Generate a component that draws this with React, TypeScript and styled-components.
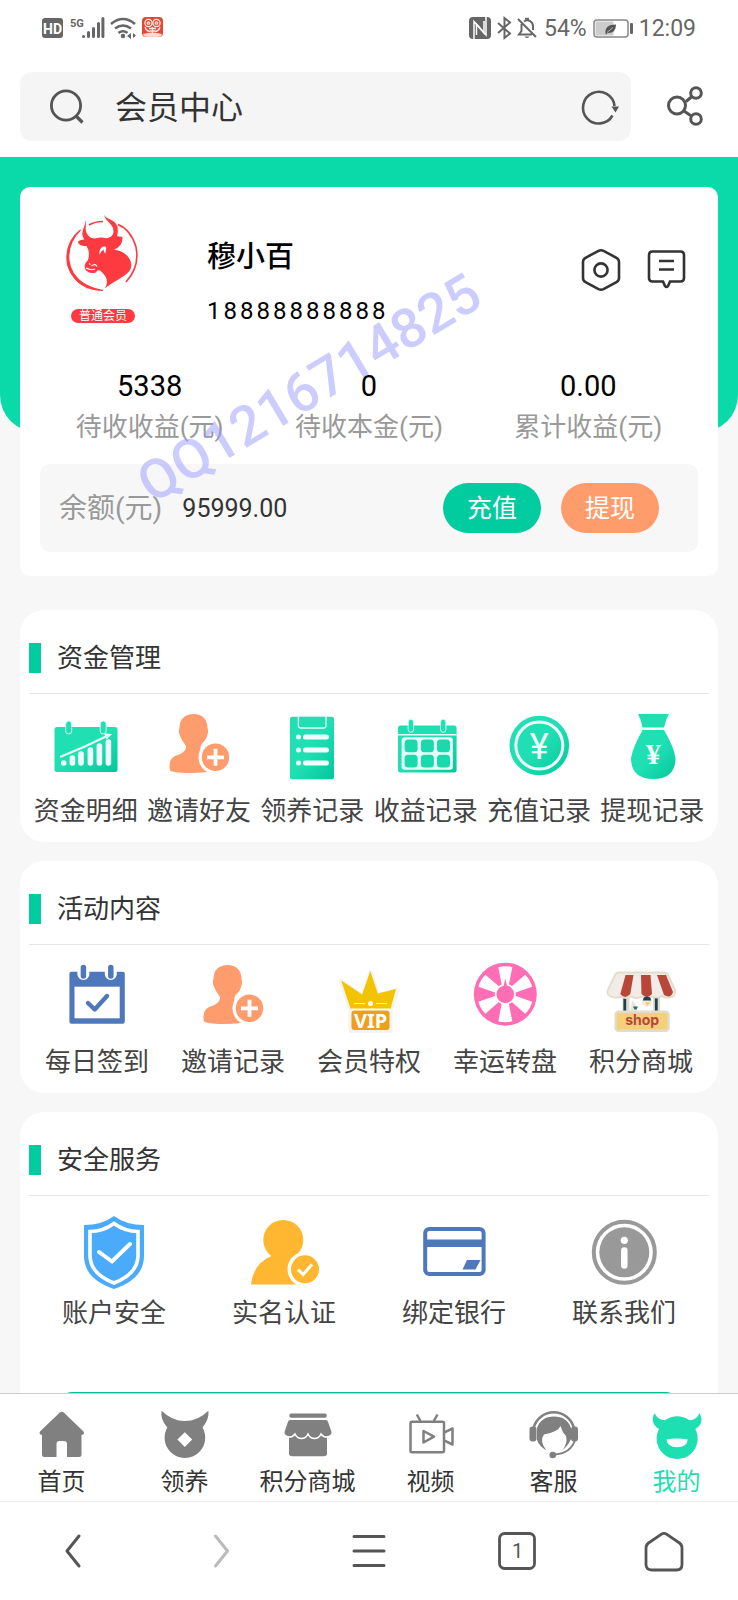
import React from "react";
import styled, { createGlobalStyle } from "styled-components";

const GlobalStyle = createGlobalStyle`
  *, *::before, *::after { box-sizing: border-box; }
  html, body, #root { height: 100%; }
  body {
    margin: 0;
    background: #f7f7f7;
    font-family: Roboto, "Noto Sans CJK SC", sans-serif;
    color: #333;
  }
  button { border: 0; padding: 0; background: none; font: inherit; color: inherit; cursor: pointer; }
  a { color: inherit; text-decoration: none; }
  h1, h2, p, dl, dt, dd { margin: 0; font-weight: 400; }
  svg { display: block; overflow: visible; }
`;

const Screen = styled.div`
  display: flex;
  flex-direction: column;
  height: 100vh;
  overflow: hidden;
`;

/* ---------- top of the browser ---------- */

const StatusBar = styled.div`
  display: flex;
  justify-content: space-between;
  align-items: center;
  height: 56px;
  padding: 0 42px;
  background: #fff;
  color: #666;
  font-size: 23px;
`;

const StatusGroup = styled.div`
  display: flex;
  align-items: center;
  gap: 6px;
`;

const AddressRow = styled.div`
  display: flex;
  align-items: center;
  gap: 35px;
  padding: 16px 32px 16px 20px;
  background: #fff;
`;

const SearchBox = styled.label`
  display: flex;
  flex: 1;
  align-items: center;
  gap: 30px;
  height: 69px;
  padding: 0 12px 0 29px;
  border-radius: 12px;
  background: #f5f5f5;
`;

const SearchInput = styled.input`
  flex: 1;
  min-width: 0;
  padding: 2px 0 0;
  border: 0;
  outline: 0;
  background: transparent;
  color: #333;
  font: 32px/44px Roboto, "Noto Sans CJK SC", sans-serif;
`;

/* ---------- scrolling page ---------- */

const Page = styled.main`
  flex: 1;
  min-height: 0;
  overflow-y: auto;
  scrollbar-width: none;
`;

const Hero = styled.div`
  height: 275px;
  margin-bottom: -245px;
  border-radius: 0 0 37px 37px;
  background: #0ad9a9;
`;

const Content = styled.div`
  display: flex;
  flex-direction: column;
  gap: 19px;
  padding: 0 20px;
`;

const ProfileCard = styled.section`
  position: relative;
  margin-bottom: 15px;
  padding: 26px 20px 24px;
  border-radius: 10px;
  background: #fff;
`;

const ProfileTop = styled.div`
  display: flex;
  height: 114px;
  padding: 0 13px 0 26px;
`;

const Avatar = styled.div`
  display: flex;
  flex-direction: column;
  align-items: center;
  gap: 16px;
  width: 74px;
`;

const Badge = styled.span`
  width: 64px;
  border-radius: 7px;
  background: #fe3a41;
  color: #fff;
  font-size: 12px;
  line-height: 14px;
  text-align: center;
`;

const Identity = styled.div`
  flex: 1;
  padding: 22px 0 0 67px;
  color: #000;
`;

const Name = styled.h1`
  font-size: 29px;
  font-weight: 500;
  line-height: 44px;
`;

const Phone = styled.p`
  margin-top: 16px;
  font-size: 24px;
  line-height: 32px;
  letter-spacing: 3px;
`;

const ProfileActions = styled.div`
  display: flex;
  align-items: flex-start;
  gap: 28px;
  padding-top: 36px;
`;

const Stats = styled.dl`
  display: grid;
  grid-template-columns: repeat(3, 1fr);
  margin-top: 40px;
`;

const Stat = styled.div`
  display: flex;
  flex-direction: column-reverse;
  align-items: center;
  dd { color: #000; font-size: 29px; line-height: 38px; }
  dt { color: #999; font-size: 26px; line-height: 44px; }
`;

const Balance = styled.div`
  display: flex;
  align-items: center;
  gap: 20px;
  height: 88px;
  margin-top: 15px;
  padding: 0 39px 0 19px;
  border-radius: 10px;
  background: #f7f7f7;
`;

const BalanceLabel = styled.span`
  padding-bottom: 4px;
  color: #999;
  font-size: 28px;
`;

const BalanceValue = styled.span`
  flex: 1;
  font-size: 25px;
`;

const PillButton = styled.button<{ $color: string }>`
  width: 98px;
  height: 50px;
  padding-bottom: 4px;
  border-radius: 25px;
  background: ${(p) => p.$color};
  color: #fff;
  font-size: 25px;
`;

const Watermark = styled.span`
  position: absolute;
  left: 137px;
  top: 270px;
  transform: rotate(-31deg);
  transform-origin: 0 100%;
  color: rgba(154, 154, 255, 0.5);
  font-size: 55px;
  line-height: 55px;
  font-weight: 500;
  pointer-events: none;
`;

/* ---------- menu sections ---------- */

const Section = styled.section`
  padding: 33px 9px 13px;
  border-radius: 24px;
  background: #fff;
`;

const SectionHead = styled.header`
  display: flex;
  align-items: center;
  gap: 16px;
  padding-bottom: 20px;
  border-bottom: 1px solid #e4e4e4;
  &::before { content: ""; width: 12px; height: 30px; background: #00cca0; }
`;

const SectionTitle = styled.h2`
  font-size: 26px;
  line-height: 30px;
`;

const MenuRow = styled.nav`
  display: flex;
  padding-top: 18px;
`;

const MenuItem = styled.a`
  display: flex;
  flex: 1;
  flex-direction: column;
  align-items: center;
  gap: 11px;
  color: #444;
  font-size: 26px;
  line-height: 36px;
  white-space: nowrap;
`;

const LogoutButton = styled.button`
  display: block;
  width: calc(100% - 62px);
  height: 80px;
  margin: 61px 31px 40px;
  border-radius: 12px;
  background: #0ab99a;
`;

/* ---------- bottom bars ---------- */

const TabBar = styled.nav`
  display: flex;
  height: 108px;
  padding-top: 16px;
  border-top: 1px solid #ccc;
  background: #fff;
`;

const Tab = styled.a<{ $active?: boolean }>`
  display: flex;
  flex: 1;
  flex-direction: column;
  align-items: center;
  gap: 4px;
  color: ${(p) => (p.$active ? "#1ddfb1" : "#333")};
  font-size: 24px;
  line-height: 36px;
  white-space: nowrap;
`;

const BrowserBar = styled.div`
  display: flex;
  height: 99px;
  border-top: 1px solid #eee;
  background: #fff;
`;

const BrowserButton = styled.button<{ $muted?: boolean }>`
  display: flex;
  flex: 1;
  align-items: center;
  justify-content: center;
  color: ${(p) => (p.$muted ? "#bbb" : "#555")};
`;

/* ---------- drawings ---------- */

const GradientDefs = styled.svg`
  position: absolute;
  width: 0;
  height: 0;
`;

const Icon = ({ size = 70, children }: { size?: number; children: React.ReactNode }) => (
  <svg width={size} height={size} viewBox={`0 0 ${size} ${size}`} fill="none" aria-hidden="true">
    {children}
  </svg>
);

const Gradients = () => (
  <GradientDefs aria-hidden="true">
    <defs>
      <linearGradient id="mint" x1="0" y1="0" x2="1" y2="1">
        <stop offset="0.5" stopColor="#1fdfb3" />
        <stop offset="1" stopColor="#06c79c" />
      </linearGradient>
    </defs>
  </GradientDefs>
);

const SignalIcons = () => (
  <svg width="122" height="24" viewBox="0 0 122 24" aria-hidden="true">
    <rect x="0" y="2" width="21" height="20" rx="3" fill="#666" />
    <text x="10.500" y="17.500" fill="#fff" fontSize="14" fontWeight="700" textAnchor="middle">HD</text>
    <text x="28" y="10.500" fill="#666" fontSize="11" fontWeight="700">5G</text>
    <g stroke="#666" strokeWidth="3" strokeLinecap="round">
      <path d="M41.500 20.500v0M46.500 20.500v-4M51.500 20.500v-8M56.500 20.500v-13M60.900 20.500v-18" />
    </g>
    <g stroke="#666" strokeWidth="2.600" fill="none">
      <path d="M69 8q12 -10 24 0M73 12.500q8 -6 16 0M76.500 17q4.500 -3.500 9 0" />
    </g>
    <circle cx="81" cy="20" r="2.300" fill="#666" />
    <path d="M85 20l4 -3v6zM94 19.500l-3 -2.500v5z" fill="#666" />
    <rect x="100" y="1" width="21" height="20" rx="4" fill="#df4a35" />
    <path d="M101 18q9 -3 19 0l-1 2.500q-8 1 -17 0z" fill="#ffd9cc" />
    <g fill="none" stroke="#ffe8df" strokeWidth="1.300">
      <circle cx="106.500" cy="7" r="3.600" />
      <circle cx="114.500" cy="7" r="3.600" />
      <circle cx="106.500" cy="7" r="1.200" />
      <circle cx="114.500" cy="7" r="1.200" />
      <path d="M103 11q1 4 5 4.500M118 11q-1 4 -5 4.500M107 12.500h7M108 15h5M110.500 11v7" />
    </g>
  </svg>
);

const NfcIcon = () => (
  <svg width="22" height="22" viewBox="0 0 22 22" aria-hidden="true">
    <rect width="22" height="22" rx="4" fill="#666" />
    <path d="M5 22V4.500L15 16V4" fill="none" stroke="#fff" strokeWidth="1.500" />
    <path d="M17 0V18L7.500 7V18" fill="none" stroke="#fff" strokeWidth="1.500" />
  </svg>
);

const BluetoothIcon = () => (
  <svg width="14" height="22" viewBox="0 0 14 22" aria-hidden="true">
    <path d="M1 6l12 10.500L7.500 21V1L13 5.500L1 16" fill="none" stroke="#666" strokeWidth="2" />
  </svg>
);

const MutedBellIcon = () => (
  <svg width="21" height="22" viewBox="0 0 21 22" aria-hidden="true">
    <g fill="none" stroke="#666" strokeWidth="2">
      <path d="M4.500 7v7l-2.500 3.500h13M7 4.500q3 -2 6 -0.500q3 2 3 5v4M1 2l18 18" />
      <path d="M8 1.800h4" />
    </g>
    <path d="M7.500 19.500h5q-2.500 3 -5 0z" fill="#666" />
  </svg>
);

const BatteryIcon = () => (
  <svg width="40" height="19" viewBox="0 0 40 19" aria-hidden="true">
    <rect x="1" y="1" width="34" height="17" rx="3" fill="#fff" stroke="#888" strokeWidth="1.500" />
    <rect x="2.500" y="2.500" width="18" height="14" rx="1" fill="#ccc" />
    <path d="M12.500 14.500q-1 -9 10.500 -9q0 9 -8.500 8.500l-1 1.500z" fill="#555" />
    <path d="M14 13.500l6 -5" stroke="#ccc" strokeWidth="0.800" />
    <rect x="37" y="4" width="3" height="11" rx="1" fill="#666" />
  </svg>
);

const SearchIcon = () => (
  <Icon size={36}>
    <circle cx="17" cy="16.500" r="14.600" stroke="#555" strokeWidth="2.800" />
    <path d="M27 27l6.500 6.500" stroke="#555" strokeWidth="3.200" />
  </Icon>
);

const ReloadIcon = () => (
  <Icon size={38}>
    <path d="M33.500 18A15.800 15.800 0 1 0 31.500 27.500" stroke="#555" strokeWidth="2.600" />
    <path d="M30.500 18.500h7.500l-3.500 6z" fill="#555" />
  </Icon>
);

const ShareIcon = () => (
  <Icon size={40}>
    <g stroke="#555" strokeWidth="3">
      <circle cx="11" cy="18.500" r="8.500" />
      <circle cx="30" cy="6" r="5.300" />
      <circle cx="30" cy="32" r="5.300" />
      <path d="M26 9.500l-6 5M18 24l8 5.500" />
    </g>
  </Icon>
);

const BullLogo = () => (
  <svg width="76" height="80" viewBox="0 0 76 80" fill="#fe3a41" aria-hidden="true">
    <path d="M15.500 17Q-1 32 3.500 53Q10 75 38 77.500Q13 78 4.500 57Q-4 33 15.500 17z" />
    <path d="M15.500 17Q2 30 4 48Q8 72 38 77.500Q10 75 2.600 52Q-1 30 15.500 17z" stroke="#fe3a41" strokeWidth="1.200" />
    <path d="M24 12Q30 8.500 38 8.500M53 11.500Q66 17 71 34Q75 54 61 69" fill="none" stroke="#fe3a41" strokeWidth="1.600" />
    <path d="M20.700 7C21.500 12 19.800 15 21.300 19C23 24 27 26 31 25.300Q36 23.800 41 25.300C46 25 48.500 22 48.500 18C48.500 11 41 9 39 2C42 7 49.500 6 52.300 13Q53.500 19 52 23Q55 24 57.300 23.700Q58.500 33 49 36.500C59 38 66 44 66.300 52C66.500 62 51 66 40 75.500Q44.500 67 38.500 61Q35 56 32.500 57.500Q31 60.500 26 60Q19 58.500 19.700 52.500Q20 50 23 47Q25.500 39 21.500 33Q14 33.500 13 29Q14 26.500 19.500 26.500C14 20 20.500 14 20.700 7z" />
    <path d="M34.500 42Q33.500 35 39 33.200Q42 33.500 41 37Q40 40 40.500 41Q38.500 38.500 38.500 36.500Q36 38 34.500 42z" fill="#fff" />
    <path d="M21 55q4 2.500 9 1M26.500 53q4 -3 5.500 .5M24 50.500l1.500 1" fill="none" stroke="#fff" strokeWidth="1.200" />
  </svg>
);

const SettingsIcon = () => (
  <svg width="38" height="42" viewBox="0 0 38 42" fill="none" stroke="#333" strokeWidth="2.600" aria-hidden="true">
    <path d="M16.500 1.800Q19 .6 21.500 1.800L34.500 8.800Q37 10.200 37 13V29Q37 31.800 34.500 33.200L21.500 40.200Q19 41.400 16.500 40.200L3.500 33.200Q1 31.800 1 29V13Q1 10.200 3.500 8.800z" />
    <circle cx="19" cy="21" r="6.600" />
  </svg>
);

const MessageIcon = () => (
  <svg width="37" height="40" viewBox="0 0 37 40" fill="none" stroke="#333" strokeWidth="2.600" aria-hidden="true">
    <path d="M4.500 2.500h28q3.500 0 3.500 3.500v23q0 3.500 -3.500 3.500h-10.500l-2 4.500q-1.500 2 -3 0l-2 -4.500h-10.500q-3.500 0 -3.500 -3.500v-23q0 -3.500 3.500 -3.500z" />
    <path d="M11 12h15M11 20.500h15" />
  </svg>
);

const FundChartIcon = () => (
  <Icon>
    <rect x="3.500" y="15" width="63" height="45" rx="2.500" fill="url(#mint)" />
    <g fill="#1fdfb3" stroke="#d5faf0" strokeWidth="1">
      <rect x="14.700" y="9" width="6" height="13" rx="3" />
      <rect x="49.200" y="9" width="6" height="13" rx="3" />
    </g>
    <g stroke="#f0fffb" strokeWidth="5.600" strokeLinecap="round">
      <path d="M12.700 51v0M21.400 51v-5M30 51v-9M39.400 51v-13M48.400 51v-17M57.400 51v-21" />
    </g>
    <path d="M9 45Q32 36 56 24" stroke="#e6fff9" strokeWidth="2" />
    <path d="M53 21.500l8 .5l-5.500 5.500z" fill="#e6fff9" />
  </Icon>
);

const AddPersonIcon = () => (
  <Icon>
    <path d="M15.500 16C15.500 7 21 2 29.600 2C38 2 43.500 7 43.500 16C44.300 18 44.300 20.500 43.500 22C43 26 41 29 38.500 31C35 35 36 39 40 42L43 60C30 61.500 15 61.500 6.500 59Q5 57 5.600 53C6 47 9 44.500 14 43C19 41 22.500 38 22 34C20 31 17 27 15.800 23C14.600 21 14.600 18 15.500 16z" fill="#ff9c6d" />
    <circle cx="51.500" cy="45.300" r="17" fill="#fff" />
    <circle cx="51.500" cy="45.300" r="13.700" fill="#ff9c6d" />
    <path d="M43 45.300h17M51.500 36.800v17" stroke="#fff" strokeWidth="3.800" />
  </Icon>
);

const ClipboardIcon = () => (
  <Icon>
    <rect x="13" y="4.700" width="44" height="62.600" rx="2" fill="url(#mint)" />
    <path d="M21.400 4v9.500q0 2.500 2.500 2.500h22.600q2.500 0 2.500 -2.500V4z" fill="#1fdfb3" stroke="#e6fff9" strokeWidth="1.300" />
    <g stroke="#f0fffb" strokeWidth="5" strokeLinecap="round">
      <path d="M21.500 25v0M28.500 25h21M21.500 38v0M28.500 38h21M21.500 51v0M28.500 51h21" />
    </g>
  </Icon>
);

const CalendarIcon = () => (
  <Icon>
    <rect x="7" y="13.500" width="58.600" height="47" rx="2.500" fill="url(#mint)" />
    <path d="M7 22.800h58.600" stroke="#e6fff9" strokeWidth="1.400" />
    <g fill="#1fdfb3" stroke="#d5faf0" strokeWidth="1">
      <rect x="17.200" y="7.300" width="5.400" height="13" rx="2.700" />
      <rect x="49.500" y="7.300" width="5.400" height="13" rx="2.700" />
    </g>
    <rect x="10.600" y="25.300" width="51.300" height="32.400" rx="3" fill="#e6fff9" />
    <g fill="#1cd8ad">
      {[13.600, 29.900, 46].map((x) =>
        [27.500, 42.700].map((y) => <rect key={`${x}-${y}`} x={x} y={y} width="13" height="12.800" rx="3.500" />)
      )}
    </g>
  </Icon>
);

const YuanCoinIcon = () => (
  <Icon>
    <circle cx="35.300" cy="33.500" r="29.800" fill="url(#mint)" />
    <circle cx="35.300" cy="33.500" r="23.500" stroke="#f0fffb" strokeWidth="3" />
    <text x="35.300" y="46.500" fill="#f0fffb" fontSize="36" fontWeight="400" textAnchor="middle">¥</text>
  </Icon>
);

const MoneyBagIcon = () => (
  <Icon>
    <path d="M21 2h31q-3.500 6 -5 13.500h-21.500q-1 -7.500 -4.500 -13.500z" fill="#1fdfb3" />
    <path d="M25.500 18h21.500Q57 35 58.500 46Q58.500 67 36.300 67Q14 67 14 46Q16 35 25.500 18z" fill="url(#mint)" />
    <text x="36.200" y="52" fill="#f0fffb" fontSize="30" fontWeight="700" fontFamily="Liberation Serif, serif" textAnchor="middle">¥</text>
  </Icon>
);

const CheckInIcon = () => (
  <Icon>
    <rect x="7.400" y="8.700" width="55.400" height="52" rx="2" fill="#4f78bc" />
    <rect x="12.500" y="23.700" width="45.200" height="31.600" fill="#fff" />
    <g strokeLinecap="round">
      <path d="M21.400 3v8M48.800 3v8" stroke="#fff" strokeWidth="12" />
      <path d="M21.400 4.500v8.500M48.800 4.500v8.500" stroke="#4f78bc" strokeWidth="5.500" />
      <path d="M26 40l6.700 6.500L45 33" stroke="#4f78bc" strokeWidth="4.400" strokeLinejoin="round" />
    </g>
  </Icon>
);

const VipIcon = () => (
  <Icon>
    <path d="M7 18l9.500 29v21h40v-21l7 -20l-19 5l-8 -23l-8 24z" fill="#fff" stroke="#f3f3f0" strokeWidth="4" strokeLinejoin="round" />
    <path d="M7.200 17.500L28.200 31.500L36.300 8L43.800 30.500L62 26L56.500 45.500H16.500z" fill="#f4c300" />
    <path d="M20 40.500h11M42 40.500h11" stroke="#fff3bd" strokeWidth="1.200" />
    <circle cx="36.500" cy="40.500" r="2.500" fill="#fff" />
    <rect x="17.500" y="47.500" width="38" height="19.500" rx="3" fill="#efa01b" />
    <text x="36.500" y="64.500" fill="#fff" fontSize="20" fontWeight="700" fontFamily="Noto Sans, sans-serif" textAnchor="middle">VIP</text>
  </Icon>
);

const WheelIcon = () => (
  <Icon>
    <circle cx="35.300" cy="31.200" r="31.500" fill="#ff6db5" />
    <g fill="#fff">
      {[0, 60, 120, 180, 240, 300].map((a) => (
        <path key={a} d="M28.300 4.200q7 -2 14 0L38.800 22h-7z" transform={`rotate(${a} 35.300 31.200)`} />
      ))}
    </g>
    <circle cx="35.300" cy="31.200" r="10.500" fill="#fff" />
    <circle cx="35.300" cy="31.200" r="8.800" fill="#ff6db5" />
    <path d="M33.300 24l2 -8.500l2 8.500z" fill="#ff6db5" />
  </Icon>
);

const ShopIcon = () => (
  <Icon>
    <path d="M20 34v15M50.500 34v15" stroke="#e2dccb" strokeWidth="7" />
    <path d="M18.800 33v17M50.300 33v17" stroke="#1d4152" strokeWidth="2.800" />
    <path d="M13 9.500h45Q61 9.500 62.500 13L69 27Q70.500 34 62.500 34.500Q58 35 56 33Q52 36 46 33.500Q41 36.500 36 33.500Q30 36.500 25 33.500Q20 36.500 14.500 33.500Q11 35.500 6 34Q0 32 1.800 27L8.500 13Q10 9.500 13 9.500z" fill="#f3ebe8" stroke="#e2dccb" strokeWidth="1.800" />
    <g fill="#b8473a">
      <path d="M19.600 12H27.500L24.300 31Q19 37 14.300 31z" />
      <path d="M35 12h9.500l1.500 19Q41 37 35.500 31z" />
      <path d="M51 12h9L67 29Q65 36 58 32z" />
    </g>
    <circle cx="41" cy="39" r="5" fill="#f3ecd9" />
    <path d="M37 37.500a4 4 0 0 1 8 0z" fill="#1d4152" />
    <path d="M39 39.500h5l-2.500 3z" fill="#f0c94c" />
    <path d="M26 38q5 2 5 12h-7z" fill="#ece6d8" />
    <path d="M27 43.500h5l-1.500 3h-2z" fill="#2a6a73" />
    <rect x="9.600" y="48.700" width="53" height="19" rx="3" fill="#f6d079" stroke="#e2dccb" strokeWidth="2.400" />
    <text x="36.200" y="61.500" fill="#b8473a" fontSize="14" fontWeight="700" fontFamily="Inter, sans-serif" textAnchor="middle">shop</text>
  </Icon>
);

const ShieldIcon = () => (
  <Icon>
    <path d="M35 2Q47 11 65 11V42Q65 65 35 75Q5 65 5 42V11Q23 11 35 2z" fill="#4aabfb" />
    <path d="M35 9.500Q46 17.500 59 17.500V42Q58.500 60 35 69Q11.500 60 11 42V17.500Q24 17.500 35 9.500z" stroke="#fff" strokeWidth="3.600" />
    <path d="M20 38l13 9.500L51 30" stroke="#fff" strokeWidth="4" strokeLinecap="round" />
  </Icon>
);

const VerifiedPersonIcon = () => (
  <Icon>
    <circle cx="34.300" cy="26" r="20" fill="#ffb630" />
    <path d="M22.500 42Q4 50 2 70.500H50V46z" fill="#ffb630" />
    <circle cx="56" cy="55.300" r="17.500" fill="#fff" />
    <circle cx="56" cy="55.300" r="14" fill="#ffb630" />
    <path d="M49 55.500l5 5l9 -10" stroke="#fff" strokeWidth="3" />
  </Icon>
);

const BankCardIcon = () => (
  <Icon>
    <rect x="6.200" y="15" width="58.400" height="45" rx="4" stroke="#4f78bc" strokeWidth="4" />
    <path d="M5 29.200h60" stroke="#4f78bc" strokeWidth="7.500" />
    <path d="M48 46h13.500l-5 9.500h-13z" fill="#4f78bc" />
  </Icon>
);

const ContactIcon = () => (
  <Icon>
    <circle cx="35.300" cy="38.300" r="30.500" stroke="#999" strokeWidth="4" />
    <circle cx="35.300" cy="38.300" r="25" fill="#999" />
    <circle cx="35.300" cy="26.300" r="3.600" fill="#fff" />
    <path d="M35.300 36.500v15" stroke="#fff" strokeWidth="6.500" strokeLinecap="round" />
  </Icon>
);

const HomeTabIcon = () => (
  <Icon size={50}>
    <path d="M22.500 2.700Q24.800 1 27 2.700L46.500 21.500Q48 24.500 44.500 25V44.500Q44.500 47 42 47H30V34Q30 31 27 31H22.500Q19.500 31 19.500 34V47H7.500Q5 47 5 44.500V25Q1.500 24.500 3 21.500z" fill="#808080" />
  </Icon>
);

const BullTabIcon = () => (
  <Icon size={50}>
    <path d="M1.600 .7Q12 11 24.800 11Q38 11 48.400 .7Q49.500 9 42.500 17.500A20.300 20.300 0 1 1 7.300 17.500Q0 9 1.600 .7z" fill="#808080" />
    <path d="M24.800 22.200l7.400 7.400l-7.400 7.400l-7.400 -7.400z" fill="#fff" />
  </Icon>
);

const StoreTabIcon = () => (
  <Icon size={50}>
    <rect x="6.300" y="3.600" width="37.500" height="4.200" rx="2" fill="#808080" />
    <rect x="6" y="24" width="38" height="22.200" rx="3" fill="#808080" />
    <path d="M7 9.300H43Q45 9.300 45.700 11.500L49.300 22Q49.500 26 44 27Q40 27 38 24Q36 28.500 31.500 28.500Q27 28.500 25 24Q23 28.500 18.500 28.500Q14 28.500 12 24Q10 27 6 27Q.5 26 .7 22L4.300 11.500Q5 9.300 7 9.300z" fill="#808080" stroke="#fff" strokeWidth="1.500" />
  </Icon>
);

const VideoTabIcon = () => (
  <Icon size={50}>
    <g stroke="#808080" strokeWidth="2.500" strokeLinejoin="round">
      <rect x="4.500" y="11.800" width="33.500" height="30.500" rx="1.500" />
      <path d="M10.800 4.500l3.700 6.500M31.500 4.500l-3.700 6.500M17.500 21v11.500l10.500 -5.800zM38.500 22.300l8 -3.800v16l-8 -3.800" />
    </g>
  </Icon>
);

const ServiceTabIcon = () => (
  <Icon size={50}>
    <path d="M4.500 18A20.900 20.900 0 0 1 45 18" stroke="#808080" strokeWidth="2.600" />
    <path d="M46 30Q42 43 26 44.500" stroke="#808080" strokeWidth="2" />
    <circle cx="23.800" cy="45" r="3.300" fill="#808080" />
    <rect x=".5" y="16.500" width="7" height="15" rx="3" fill="#808080" />
    <rect x="42" y="16.500" width="7" height="15" rx="3" fill="#808080" />
    <path d="M8 18Q12 6.500 25 6.500Q38 6.500 42 18V29Q39 36 33.500 40Q39 33 37 26Q33 22 31.500 16Q29 22 15 24.500Q10 31 17.500 40.500Q10 36 8 30z" fill="#808080" />
  </Icon>
);

const MineTabIcon = () => (
  <Icon size={50}>
    <path d="M2.500 3Q5.500 10 13 10.300Q25 2 37.500 10.300Q45 10 47.500 3Q53 13 43.300 19A20.500 20.500 0 1 1 7 19Q-2.500 13 2.500 3z" fill="#1ddfb1" />
    <path d="M14.500 29.500Q25 27.500 35.800 29.500Q35 37.300 25.200 37.300Q15.500 37.300 14.500 29.500z" fill="#fff" />
  </Icon>
);

/* ---------- page data ---------- */

type Entry = { label: string; icon: React.ComponentType };

const funds: Entry[] = [
  { label: "资金明细", icon: FundChartIcon },
  { label: "邀请好友", icon: AddPersonIcon },
  { label: "领养记录", icon: ClipboardIcon },
  { label: "收益记录", icon: CalendarIcon },
  { label: "充值记录", icon: YuanCoinIcon },
  { label: "提现记录", icon: MoneyBagIcon },
];

const activities: Entry[] = [
  { label: "每日签到", icon: CheckInIcon },
  { label: "邀请记录", icon: AddPersonIcon },
  { label: "会员特权", icon: VipIcon },
  { label: "幸运转盘", icon: WheelIcon },
  { label: "积分商城", icon: ShopIcon },
];

const services: Entry[] = [
  { label: "账户安全", icon: ShieldIcon },
  { label: "实名认证", icon: VerifiedPersonIcon },
  { label: "绑定银行", icon: BankCardIcon },
  { label: "联系我们", icon: ContactIcon },
];

const tabs: Entry[] = [
  { label: "首页", icon: HomeTabIcon },
  { label: "领养", icon: BullTabIcon },
  { label: "积分商城", icon: StoreTabIcon },
  { label: "视频", icon: VideoTabIcon },
  { label: "客服", icon: ServiceTabIcon },
  { label: "我的", icon: MineTabIcon },
];

const stats = [
  { label: "待收收益(元)", value: "5338" },
  { label: "待收本金(元)", value: "0" },
  { label: "累计收益(元)", value: "0.00" },
];

const MenuSection = ({ title, items, children }: { title: string; items: Entry[]; children?: React.ReactNode }) => (
  <Section>
    <SectionHead>
      <SectionTitle>{title}</SectionTitle>
    </SectionHead>
    <MenuRow aria-label={title}>
      {items.map(({ label, icon: Drawing }) => (
        <MenuItem key={label} href="#">
          <Drawing />
          {label}
        </MenuItem>
      ))}
    </MenuRow>
    {children}
  </Section>
);

export default function App() {
  return (
    <Screen>
      <GlobalStyle />
      <Gradients />
      <StatusBar>
        <SignalIcons />
        <StatusGroup>
          <NfcIcon />
          <BluetoothIcon />
          <MutedBellIcon />
          <span>54%</span>
          <BatteryIcon />
          <span>12:09</span>
        </StatusGroup>
      </StatusBar>
      <AddressRow>
        <SearchBox>
          <SearchIcon />
          <SearchInput aria-label="搜索" defaultValue="会员中心" />
          <button type="button" aria-label="刷新"><ReloadIcon /></button>
        </SearchBox>
        <button type="button" aria-label="分享"><ShareIcon /></button>
      </AddressRow>

      <Page>
        <Hero />
        <Content>
          <ProfileCard>
            <ProfileTop>
              <Avatar>
                <BullLogo />
                <Badge>普通会员</Badge>
              </Avatar>
              <Identity>
                <Name>穆小百</Name>
                <Phone>18888888888</Phone>
              </Identity>
              <ProfileActions>
                <button type="button" aria-label="设置"><SettingsIcon /></button>
                <button type="button" aria-label="消息"><MessageIcon /></button>
              </ProfileActions>
            </ProfileTop>
            <Stats>
              {stats.map((s) => (
                <Stat key={s.label}>
                  <dt>{s.label}</dt>
                  <dd>{s.value}</dd>
                </Stat>
              ))}
            </Stats>
            <Balance>
              <BalanceLabel>余额(元)</BalanceLabel>
              <BalanceValue>95999.00</BalanceValue>
              <PillButton type="button" $color="#00cca0">充值</PillButton>
              <PillButton type="button" $color="#ff9c6b">提现</PillButton>
            </Balance>
            <Watermark>QQ1216714825</Watermark>
          </ProfileCard>

          <MenuSection title="资金管理" items={funds} />
          <MenuSection title="活动内容" items={activities} />
          <MenuSection title="安全服务" items={services}>
            <LogoutButton type="button" aria-label="退出登录" />
          </MenuSection>
        </Content>
      </Page>

      <TabBar aria-label="主导航">
        {tabs.map(({ label, icon: Drawing }) => (
          <Tab key={label} href="#" $active={label === "我的"}>
            <Drawing />
            {label}
          </Tab>
        ))}
      </TabBar>
      <BrowserBar>
        <BrowserButton type="button" aria-label="后退">
          <Icon size={40}><path d="M25 5L13 20l12 15" stroke="currentColor" strokeWidth="3" strokeLinecap="round" strokeLinejoin="round" /></Icon>
        </BrowserButton>
        <BrowserButton type="button" aria-label="前进" $muted>
          <Icon size={40}><path d="M14.500 5l12 15l-12 15" stroke="currentColor" strokeWidth="3" strokeLinecap="round" strokeLinejoin="round" /></Icon>
        </BrowserButton>
        <BrowserButton type="button" aria-label="菜单">
          <Icon size={40}><path d="M5 5.500h30M5 20h30M5 34.500h30" stroke="currentColor" strokeWidth="3" strokeLinecap="round" /></Icon>
        </BrowserButton>
        <BrowserButton type="button" aria-label="标签页">
          <Icon size={40}>
            <rect x="2.500" y="2.500" width="35" height="35" rx="5" stroke="currentColor" strokeWidth="2.800" />
            <text x="20.500" y="27" fill="currentColor" fontSize="20" textAnchor="middle">1</text>
          </Icon>
        </BrowserButton>
        <BrowserButton type="button" aria-label="主页">
          <Icon size={40}>
            <path d="M17.500 3.200Q20 1.500 22.500 3.200L35.500 12Q38 13.800 38 17V33.500Q38 39 32.500 39H7.500Q2 39 2 33.500V17Q2 13.800 4.500 12z" stroke="currentColor" strokeWidth="2.800" />
          </Icon>
        </BrowserButton>
      </BrowserBar>
    </Screen>
  );
}
